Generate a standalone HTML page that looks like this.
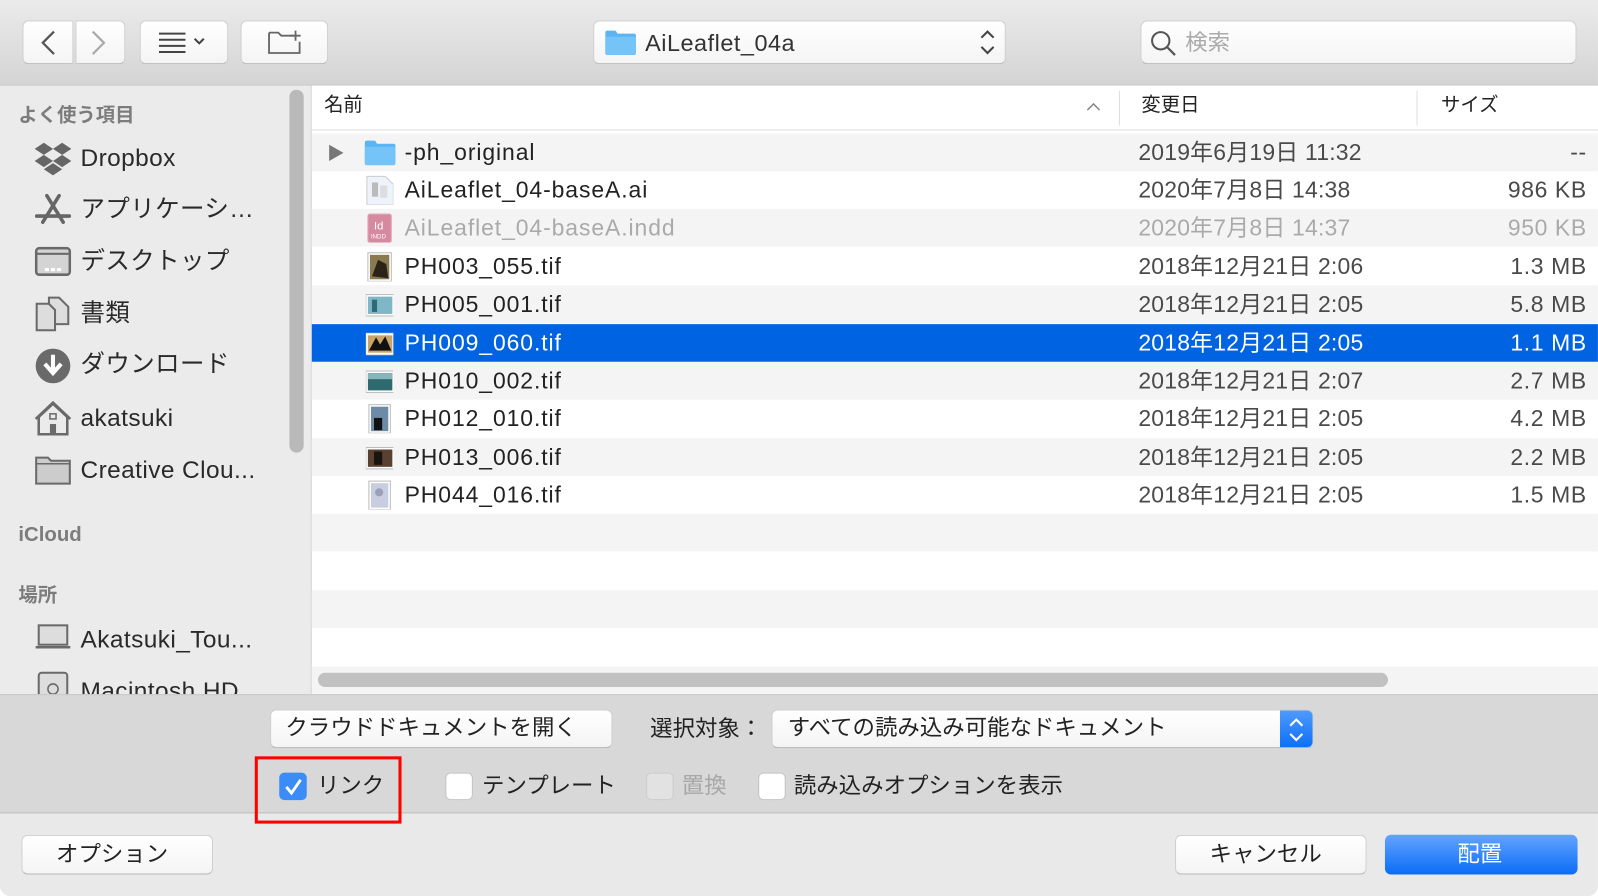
<!DOCTYPE html>
<html><head><meta charset="utf-8">
<style>
*{box-sizing:border-box;margin:0;padding:0}
body{width:1598px;height:896px;overflow:hidden;background:#fff;font-family:"Liberation Sans","Noto Sans CJK JP",sans-serif;}
#w{position:absolute;left:0;top:0;width:1568px;height:879px;transform:scale(1.0191,1.0193);transform-origin:0 0;overflow:hidden;border-radius:0 0 10px 10px;background:#ececec}
.abs{position:absolute}
.tb{left:0;top:0;width:1568px;height:84px;background:linear-gradient(#ebebeb,#d4d4d4);border-bottom:1px solid #c4c4c4}
.btn{position:absolute;background:linear-gradient(#fff,#f4f4f4);border:1px solid #cfcfcf;border-bottom-color:#b8b8b8;border-radius:6px}
.side{left:0;top:84px;width:306px;height:597px;background:#ebebeb;border-right:1px solid #d2d2d2}
.si{position:absolute;left:79px;font-size:24px;line-height:30px;color:#2a2a2a;white-space:nowrap;letter-spacing:0.4px}
.sh{position:absolute;left:18px;font-size:19px;color:#7c7c7c;font-weight:bold}
.ic{position:absolute;left:34px}
.content{left:306px;top:84px;width:1262px;height:597px;background:#fff}
.hdr{position:absolute;left:0;top:0;width:1262px;height:44px;background:#fff;border-bottom:1px solid #dcdcdc;font-size:19px;color:#222;line-height:24px}
.row{position:absolute;left:0;width:1262px;height:37px;font-size:22.5px;color:#222;line-height:26px}
.row .n{position:absolute;left:91px;top:6px;white-space:nowrap;letter-spacing:0.9px}
.row .d{position:absolute;left:811px;top:6px;color:#4a4a4a;white-space:nowrap;letter-spacing:0.2px}
.row .s{position:absolute;right:11px;top:6px;color:#4a4a4a;letter-spacing:0.6px}
.row .fi{position:absolute;left:53px;top:4px;width:27px;height:29px}
.g{background:#f4f4f4}
.sel{background:#0063e1;color:#fff}
.sel .d,.sel .s{color:#fff}
.bp{left:0;top:681px;width:1568px;height:117px;background:#d8d8d8;border-top:1px solid #c8c8c8;border-bottom:1px solid #bdbdbd;z-index:2}
.bb{left:0;top:798px;width:1568px;height:81px;background:#e9e9e9;z-index:1}
.cb{position:absolute;width:27px;height:27px;border-radius:5px;background:#fff;border:1px solid #c4c4c4}
.lbl{position:absolute;font-size:22px;line-height:28px;color:#222;white-space:nowrap}
</style></head><body>
<div id="w">
<div class="abs tb">
  <div class="btn" style="left:22px;top:20px;width:50px;height:43px;border-radius:6px 0 0 6px"></div>
  <div class="btn" style="left:74px;top:20px;width:49px;height:43px;border-radius:0 6px 6px 0"></div>
  <svg class="abs" style="left:36px;top:28px" width="80" height="28"><path d="M17 3 L6 14 L17 25" fill="none" stroke="#555" stroke-width="2.2"/><path d="M55 3 L66 14 L55 25" fill="none" stroke="#aaa" stroke-width="2.2"/></svg>
  <div class="btn" style="left:137px;top:20px;width:87px;height:43px"></div>
  <svg class="abs" style="left:155px;top:31px" width="52" height="22"><g stroke="#444" stroke-width="2"><line x1="1" y1="2" x2="27" y2="2"/><line x1="1" y1="8" x2="27" y2="8"/><line x1="1" y1="14" x2="27" y2="14"/><line x1="1" y1="20" x2="27" y2="20"/></g><path d="M36 7 L40.5 11.5 L45 7" fill="none" stroke="#444" stroke-width="2"/></svg>
  <div class="btn" style="left:236px;top:20px;width:86px;height:43px"></div>
  <svg class="abs" style="left:262px;top:27px" width="36" height="28"><path d="M2 5 H11 L14 8 H26 M32 14 V25 H2 V5" fill="none" stroke="#666" stroke-width="1.8"/><path d="M28 3 V13 M23 8 H33" stroke="#666" stroke-width="1.8"/></svg>
  <div class="btn" style="left:582px;top:20px;width:405px;height:43px"></div>
  <svg class="abs" style="left:593px;top:29px" width="32" height="26"><path d="M1 3 Q1 1 3 1 H11 L13 4 H29 Q31 4 31 6 V23 Q31 25 29 25 H3 Q1 25 1 23 Z" fill="#5bb5f2"/><rect x="1" y="7" width="30" height="18" rx="2" fill="#74c4f8"/></svg>
  <div class="lbl" style="left:633px;top:28px;font-size:23px;color:#333;letter-spacing:0.5px">AiLeaflet_04a</div>
  <svg class="abs" style="left:960px;top:27px" width="18" height="30"><path d="M3 10 L9 4 L15 10 M3 19 L9 25 L15 19" fill="none" stroke="#444" stroke-width="2"/></svg>
  <div class="btn" style="left:1119px;top:20px;width:428px;height:43px;border-radius:7px"></div>
  <svg class="abs" style="left:1128px;top:29px" width="28" height="28"><circle cx="11" cy="11" r="8.5" fill="none" stroke="#555" stroke-width="2"/><line x1="17" y1="17" x2="25" y2="25" stroke="#555" stroke-width="2.2"/></svg>
  <div class="lbl" style="left:1163px;top:28px;font-size:22px;color:#aaa">検索</div>
</div>

<div class="abs side">
  <div class="abs" style="left:284px;top:4px;width:14px;height:356px;border-radius:7px;background:#b9b9b9"></div>
  <div class="sh" style="top:14px">よく使う項目</div>
  <svg class="ic" style="top:56px" width="36" height="32"><g fill="#666"><path d="M9 0 L18 6 L9 12 L0 6Z"/><path d="M27 0 L36 6 L27 12 L18 6Z"/><path d="M9 12 L18 18 L9 24 L0 18Z"/><path d="M27 12 L36 18 L27 24 L18 18Z"/><path d="M18 20 L27 26 L18 32 L9 26Z"/></g></svg>
  <div class="si" style="top:57px">Dropbox</div>
  <svg class="ic" style="top:104px" width="36" height="34"><g stroke="#666" stroke-width="3.5" fill="none" stroke-linecap="round"><line x1="12" y1="4" x2="28" y2="30"/><line x1="24" y1="4" x2="8" y2="30"/><line x1="2" y1="24" x2="34" y2="24"/></g></svg>
  <div class="si" style="top:107px">アプリケーシ…</div>
  <svg class="ic" style="top:158px" width="36" height="30"><rect x="1.5" y="1.5" width="33" height="26" rx="3" fill="#d4d4d4" stroke="#6a6a6a" stroke-width="2.5"/><line x1="2" y1="7" x2="34" y2="7" stroke="#6a6a6a" stroke-width="2"/><g fill="#fff"><rect x="10" y="21" width="4" height="3"/><rect x="16" y="21" width="4" height="3"/><rect x="22" y="21" width="4" height="3"/></g></svg>
  <div class="si" style="top:158px">デスクトップ</div>
  <svg class="ic" style="top:206px" width="36" height="36"><path d="M2 8 H14 L20 14 V34 H2Z" fill="#ddd" stroke="#6a6a6a" stroke-width="2"/><path d="M14 2 H24 L33 11 V28 H20 V14 L14 8Z" fill="#ddd" stroke="#6a6a6a" stroke-width="2"/></svg>
  <div class="si" style="top:209px">書類</div>
  <svg class="ic" style="top:257px" width="36" height="36"><circle cx="18" cy="18" r="17" fill="#6a6a6a"/><path d="M18 7 V22 M10 16 L18 25 L26 16" stroke="#fff" stroke-width="4" fill="none"/></svg>
  <div class="si" style="top:259px">ダウンロード</div>
  <svg class="ic" style="top:308px" width="36" height="36"><path d="M4 34 V17 L18 4 L32 17 V34Z M1 19 L18 3 L35 19" fill="none" stroke="#6a6a6a" stroke-width="2.5"/><rect x="15" y="24" width="6" height="10" fill="#6a6a6a"/><rect x="15" y="14" width="6" height="5" fill="none" stroke="#6a6a6a" stroke-width="1.5"/></svg>
  <div class="si" style="top:312px">akatsuki</div>
  <svg class="ic" style="top:362px" width="36" height="30"><path d="M1.5 3 H13 L16 6 H34.5 V28.5 H1.5Z" fill="#ccc" stroke="#6a6a6a" stroke-width="2"/><line x1="2" y1="9" x2="34" y2="9" stroke="#6a6a6a" stroke-width="1.5"/></svg>
  <div class="si" style="top:363px">Creative Clou...</div>
  <div class="sh" style="top:430px;font-size:20px">iCloud</div>
  <div class="sh" style="top:485px">場所</div>
  <svg class="ic" style="top:528px" width="36" height="26"><rect x="4" y="1.5" width="28" height="19" fill="#ddd" stroke="#6a6a6a" stroke-width="2"/><line x1="1" y1="23" x2="35" y2="23" stroke="#6a6a6a" stroke-width="2.5"/></svg>
  <div class="si" style="top:529px">Akatsuki_Tou...</div>
  <svg class="ic" style="top:574px" width="36" height="30"><rect x="4" y="2" width="28" height="28" rx="3" fill="#ddd" stroke="#6a6a6a" stroke-width="2"/><circle cx="18" cy="18" r="5" fill="none" stroke="#6a6a6a" stroke-width="1.5"/></svg>
  <div class="si" style="top:580px">Macintosh HD</div>
</div>

<div class="abs content">
  <div class="hdr">
    <div class="abs" style="left:12px;top:8px">名前</div>
    <svg class="abs" style="left:760px;top:16px" width="14" height="10"><path d="M1 8 L7 2 L13 8" fill="none" stroke="#888" stroke-width="1.5"/></svg>
    <div class="abs" style="left:792px;top:5px;width:1px;height:34px;background:#ddd"></div>
    <div class="abs" style="left:814px;top:8px">変更日</div>
    <div class="abs" style="left:1084px;top:5px;width:1px;height:34px;background:#ddd"></div>
    <div class="abs" style="left:1108px;top:8px">サイズ</div>
  </div>
  <div class="row g" style="top:47px"><svg class="abs" style="left:16px;top:10px" width="16" height="18"><path d="M1 1 L15 9 L1 17Z" fill="#777"/></svg><svg class="fi" viewBox="0 0 32 26" style="width:32px;height:26px;left:51px;top:6px"><path d="M1 3 Q1 1 3 1 H11 L13 4 H29 Q31 4 31 6 V23 Q31 25 29 25 H3 Q1 25 1 23 Z" fill="#5bb5f2"/><rect x="1" y="7" width="30" height="18" rx="2" fill="#74c4f8"/></svg><span class="n">-ph_original</span><span class="d">2019年6月19日 11:32</span><span class="s">--</span></div>
  <div class="row" style="top:84px"><svg class="fi"><path d="M1 1 H19 L27 9 V29 H1Z" fill="#eef3fb" stroke="#ccc"/><rect x="6" y="7" width="6" height="14" fill="#bbb"/><rect x="14" y="10" width="7" height="12" fill="#ddd"/></svg><span class="n">AiLeaflet_04-baseA.ai</span><span class="d">2020年7月8日 14:38</span><span class="s">986 KB</span></div>
  <div class="row g" style="top:121px;color:#aaa"><svg class="fi"><rect x="2" y="1" width="23" height="28" rx="2" fill="#d58aa0" stroke="#e6a6b8"/><text x="8" y="16" font-size="11" fill="#fff" font-family="Liberation Sans">Id</text><text x="5" y="25" font-size="6" fill="#fff" font-family="Liberation Sans">INDD</text></svg><span class="n">AiLeaflet_04-baseA.indd</span><span class="d" style="color:#aaa">2020年7月8日 14:37</span><span class="s" style="color:#aaa">950 KB</span></div>
  <div class="row" style="top:159px"><svg class="fi"><rect x="2" y="1" width="23" height="28" fill="#fff" stroke="#bbb"/><rect x="4" y="3" width="19" height="24" fill="#8a7a50"/><path d="M6 24 L12 8 L20 12 L22 26Z" fill="#2a2418"/></svg><span class="n">PH003_055.tif</span><span class="d">2018年12月21日 2:06</span><span class="s">1.3 MB</span></div>
  <div class="row g" style="top:196px"><svg class="fi"><rect x="0" y="5" width="28" height="21" fill="#fff" stroke="#bbb"/><rect x="2" y="7" width="24" height="17" fill="#7fb7c6"/><rect x="6" y="10" width="5" height="12" fill="#2d6a7a"/></svg><span class="n">PH005_001.tif</span><span class="d">2018年12月21日 2:05</span><span class="s">5.8 MB</span></div>
  <div class="row sel" style="top:234px"><svg class="fi"><rect x="0" y="5" width="28" height="21" fill="#fff" stroke="#ddd"/><rect x="2" y="7" width="24" height="17" fill="#c9a46a"/><path d="M3 22 L10 9 L14 16 L19 8 L25 22Z" fill="#111"/></svg><span class="n">PH009_060.tif</span><span class="d">2018年12月21日 2:05</span><span class="s">1.1 MB</span></div>
  <div class="row g" style="top:271px"><svg class="fi"><rect x="0" y="5" width="28" height="21" fill="#fff" stroke="#bbb"/><rect x="2" y="7" width="24" height="17" fill="#2f6a6e"/><rect x="2" y="7" width="24" height="6" fill="#88b5bb"/></svg><span class="n">PH010_002.tif</span><span class="d">2018年12月21日 2:07</span><span class="s">2.7 MB</span></div>
  <div class="row" style="top:308px"><svg class="fi"><rect x="3" y="1" width="21" height="28" fill="#fff" stroke="#bbb"/><rect x="5" y="3" width="17" height="24" fill="#6d8aa6"/><rect x="8" y="14" width="8" height="12" fill="#111"/></svg><span class="n">PH012_010.tif</span><span class="d">2018年12月21日 2:05</span><span class="s">4.2 MB</span></div>
  <div class="row g" style="top:346px"><svg class="fi"><rect x="0" y="5" width="28" height="21" fill="#fff" stroke="#bbb"/><rect x="2" y="7" width="24" height="17" fill="#5a4030"/><rect x="8" y="9" width="8" height="13" fill="#1a1410"/></svg><span class="n">PH013_006.tif</span><span class="d">2018年12月21日 2:05</span><span class="s">2.2 MB</span></div>
  <div class="row" style="top:383px"><svg class="fi"><rect x="3" y="1" width="21" height="28" fill="#fff" stroke="#bbb"/><rect x="5" y="3" width="17" height="24" fill="#c8cde0"/><circle cx="13" cy="12" r="4" fill="#9aa0b8"/></svg><span class="n">PH044_016.tif</span><span class="d">2018年12月21日 2:05</span><span class="s">1.5 MB</span></div>
  <div class="row g" style="top:420px"></div>
  <div class="row g" style="top:495px"></div>
  <div class="row g" style="top:570px;height:27px"></div>
  <div class="abs" style="left:6px;top:576px;width:1050px;height:14px;border-radius:7px;background:#c1c1c1"></div>
</div>

<div class="abs bb">
  <div class="btn" style="left:21px;top:21px;width:188px;height:39px"></div>
  <div class="lbl" style="left:55px;top:26px">オプション</div>
  <div class="btn" style="left:1153px;top:21px;width:188px;height:39px"></div>
  <div class="lbl" style="left:1187px;top:26px">キャンセル</div>
  <div class="abs" style="left:1359px;top:21px;width:189px;height:39px;border-radius:6px;background:linear-gradient(#62a4ff,#0a6cf5)"></div>
  <div class="lbl" style="left:1430px;top:26px;color:#fff">配置</div>
</div>

<div class="abs bp">
  <div class="btn" style="left:265px;top:14px;width:336px;height:38px"></div>
  <div class="lbl" style="left:280px;top:18px">クラウドドキュメントを開く</div>
  <div class="lbl" style="left:638px;top:19px">選択対象：</div>
  <div class="btn" style="left:757px;top:14px;width:532px;height:38px;border-radius:6px;overflow:hidden">
    <div class="abs" style="right:0;top:0;width:32px;height:38px;background:linear-gradient(#4e9bff,#0a6cf5)"></div>
    <svg class="abs" style="right:7px;top:6px" width="18" height="26"><path d="M3 9 L9 3 L15 9 M3 17 L9 23 L15 17" fill="none" stroke="#fff" stroke-width="2"/></svg>
  </div>
  <div class="lbl" style="left:773px;top:18px">すべての読み込み可能なドキュメント</div>
  <div class="abs" style="left:250px;top:60px;width:144px;height:66px;border:3px solid #f00"></div>
  <div class="cb" style="left:274px;top:76px;background:#3c8cf8;border-color:#3c8cf8"></div>
  <svg class="abs" style="left:277px;top:79px" width="22" height="22"><path d="M4 11 L9 17 L18 4" fill="none" stroke="#fff" stroke-width="2.8"/></svg>
  <div class="lbl" style="left:311px;top:75px">リンク</div>
  <div class="cb" style="left:437px;top:76px"></div>
  <div class="lbl" style="left:473px;top:75px">テンプレート</div>
  <div class="cb" style="left:634px;top:76px;background:#e2e2e2;border-color:#ccc"></div>
  <div class="lbl" style="left:669px;top:75px;color:#a8a8a8">置換</div>
  <div class="cb" style="left:744px;top:76px"></div>
  <div class="lbl" style="left:779px;top:75px">読み込みオプションを表示</div>
</div>
</div>
</body></html>
